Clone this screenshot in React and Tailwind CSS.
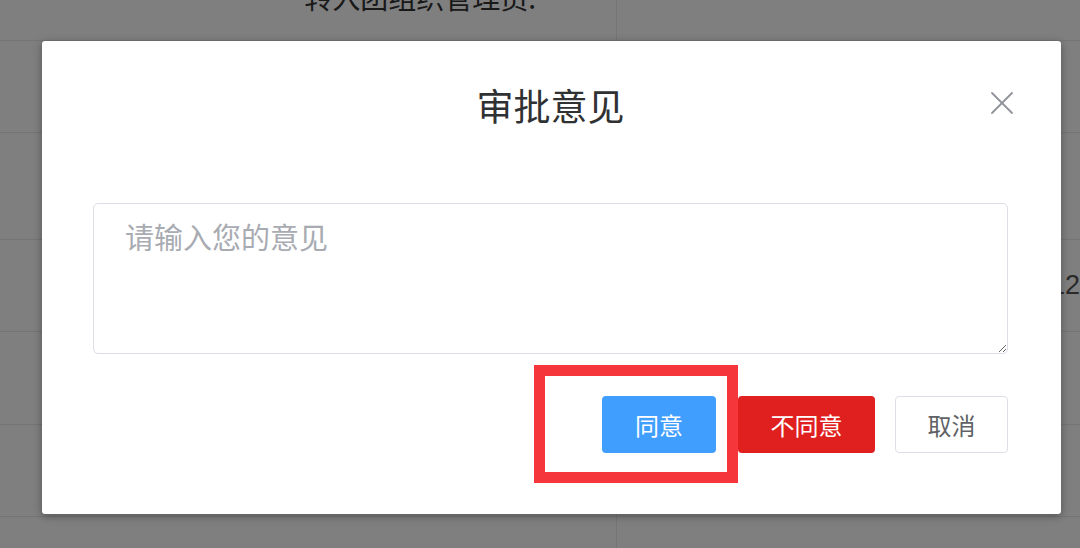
import { X } from 'lucide-react';

const rows = [
  { h: 'h-[91px]', left: '转入团组织管理员:', right: '' },
  { h: 'h-[92px]', left: '', right: '' },
  { h: 'h-[107px]', left: '', right: '' },
  { h: 'h-[92px]', left: '', right: '2020-03-12' },
  { h: 'h-[93px]', left: '', right: '' },
  { h: 'h-[92px]', left: '', right: '' },
  { h: 'h-[92px]', left: '', right: '' },
];

function BackgroundTable() {
  return (
    <div className="-mt-[50px] flex flex-col">
      {rows.map((row, i) => (
        <div key={i} className={`flex ${row.h} border-b border-[#ebebeb]`}>
          <div className="flex w-[617px] items-center justify-end border-r border-[#ebebeb] pt-[4px] pr-[80px] text-[28px] text-[#333]">
            {row.left}
          </div>
          <div className="flex flex-1 items-center pl-[428px] font-['Liberation_Sans',sans-serif] text-[27px] text-[#555] whitespace-nowrap">
            {row.right}
          </div>
        </div>
      ))}
    </div>
  );
}

export default function App() {
  return (
    <div className="relative h-[548px] w-[1080px] overflow-hidden bg-white font-['Noto_Sans_CJK_SC','Noto_Sans',sans-serif]">
      <BackgroundTable />

      {/* Mask */}
      <div className="absolute inset-0 bg-black/50" />

      {/* Dialog */}
      <div className="absolute left-[42px] top-[41px] flex h-[473px] w-[1019px] flex-col rounded-[3px] bg-white px-[51px] pr-[53px] shadow-[0_2px_8px_rgba(0,0,0,0.35)]">
        <div className="pt-[40px] text-center text-[37px] leading-[48px] text-[#303133]">审批意见</div>
        <button className="absolute right-[39px] top-[42px] text-[#909399]">
          <X className="h-10 w-10" strokeWidth={1.1} />
        </button>

        <textarea
          className="mt-[74px] h-[151px] w-full rounded-[5px] border border-[#dcdfe6] px-[31px] pt-[14px] text-[29px] leading-[36px] text-[#606266] outline-none placeholder:text-[#a8abb2]"
          placeholder="请输入您的意见"
        />

        <div className="mt-[42px] flex justify-end">
          <button className="h-[57px] w-[114px] rounded-[4px] bg-[#409eff] text-[24px] text-white">同意</button>
          <button className="ml-[22px] h-[57px] w-[137px] rounded-[4px] bg-[#e01f1f] text-[24px] text-white">不同意</button>
          <button className="ml-[20px] h-[57px] w-[113px] rounded-[4px] border border-[#dcdfe6] bg-white text-[24px] text-[#606266]">取消</button>
        </div>

        {/* Highlight frame */}
        <div className="pointer-events-none absolute left-[492px] top-[324px] h-[118px] w-[204px] border-[11px] border-[#f5363a]" />
      </div>
    </div>
  );
}
